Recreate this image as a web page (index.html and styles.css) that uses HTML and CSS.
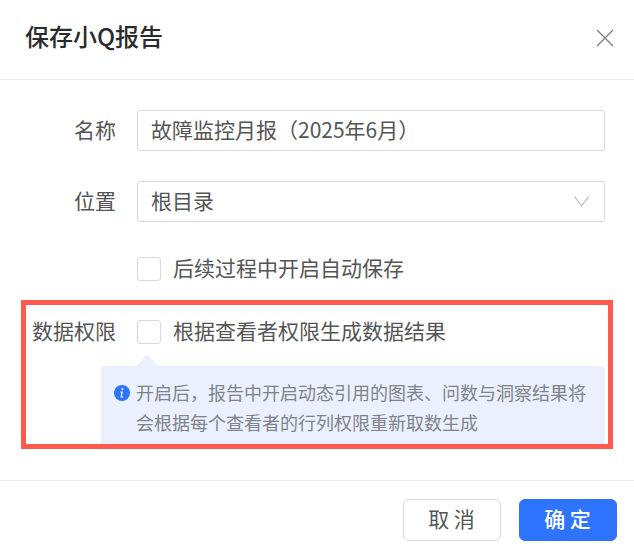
FILE: index.html
```html
<!DOCTYPE html>
<html lang="zh-CN">
<head>
<meta charset="utf-8">
<title>保存小Q报告</title>
<link rel="stylesheet" href="styles.css">
</head>
<body>
<div class="dialog">
  <header class="head">
    <h1 class="title">保存小Q报告</h1>
    <svg class="close" width="18" height="18" viewBox="0 0 18 18"><path d="M1 1L17 17M17 1L1 17" stroke="#808080" stroke-width="1.4" fill="none"/></svg>
  </header>
  <main class="body">
    <div class="row first">
      <label class="label">名称</label>
      <div class="field">故障监控月报（2025年6月）</div>
    </div>
    <div class="row second">
      <label class="label">位置</label>
      <div class="field select">
        <span>根目录</span>
        <svg class="chev" width="15" height="11" viewBox="0 0 15 11"><path d="M0.6 0.6L7.5 10L14.4 0.6" stroke="#bdbdbd" stroke-width="1.2" fill="none"/></svg>
      </div>
    </div>
    <div class="row third">
      <span class="label"></span>
      <span class="check"></span>
      <span class="check-text">后续过程中开启自动保存</span>
    </div>
    <div class="row fourth">
      <span class="label">数据权限</span>
      <span class="check"></span>
      <span class="check-text">根据查看者权限生成数据结果</span>
    </div>
    <div class="tip">
      <span class="tip-arrow"></span>
      <svg class="info" width="16" height="16" viewBox="0 0 16 16"><circle cx="8" cy="8" r="8" fill="#2f74ff"/><rect x="7.4" y="3" width="2" height="2" rx="1" fill="#fff"/><path d="M6.4 6.6H8.9L7.9 11.6H9.2V12.4H6.5L7.4 7.4H6.3Z" fill="#fff"/></svg>
      <p class="tip-text">开启后，报告中开启动态引用的图表、问数与洞察结果将<br>会根据每个查看者的行列权限重新取数生成</p>
    </div>
    <div class="annot"></div>
  </main>
  <footer class="foot">
    <button class="btn">取 消</button>
    <button class="btn primary">确 定</button>
  </footer>
</div>
</body>
</html>
```

FILE: styles.css
```css
* { box-sizing: border-box; }
html, body { margin: 0; padding: 0; background: #fff; }
body {
  width: 634px;
  height: 560px;
  overflow: hidden;
  font-family: "Noto Sans CJK SC", "Noto Sans", sans-serif;
  color: #555;
}
.dialog { display: flex; flex-direction: column; height: 560px; }
.head {
  height: 80px;
  flex: none;
  display: flex;
  align-items: center;
  justify-content: space-between;
  padding: 0 20px 4px 25px;
  border-bottom: 1px solid #ececec;
}
.title { margin: 0 0 3px; font-size: 24px; line-height: 30px; font-weight: 500; color: #2b2b2b; }
.body { position: relative; height: 400px; flex: none; padding: 30px 29px 0 0; }
.row { display: flex; align-items: center; }
.label { width: 116px; flex: none; text-align: right; font-size: 21px; line-height: 26px; padding-bottom: 4px; margin-right: 21px; color: #555; }
.field {
  flex: 1;
  height: 41px;
  border: 1px solid #d9d9d9;
  border-radius: 3px;
  padding: 0 15px 3px 13px;
  font-size: 21px;
  line-height: 36px;
  color: #555;
}
.select { display: flex; align-items: center; justify-content: space-between; }
.chev { margin-top: 3px; }
.second { margin-top: 30px; }
.third { margin-top: 32px; }
.fourth { margin-top: 33px; }
.check { width: 24px; height: 24px; flex: none; border: 1px solid #d9d9d9; border-radius: 3px; background: #fff; margin-right: 12px; }
.check-text { font-size: 21px; line-height: 26px; padding-bottom: 4px; color: #555; }
.tip {
  position: relative;
  margin: 19px 0 0 101px;
  width: 504px;
  height: 80px;
  background: #eaf0fe;
  border-radius: 4px 4px 0 0;
  padding: 11px 0 0 13px;
  display: flex;
  gap: 6px;
}
.tip-arrow {
  position: absolute;
  left: 35px;
  top: -11px;
  width: 0;
  height: 0;
  border-left: 11px solid transparent;
  border-right: 11px solid transparent;
  border-bottom: 11px solid #eaf0fe;
}
.info { flex: none; margin-top: 8px; }
.tip-text { margin: 0; font-size: 18px; line-height: 30px; color: #808489; white-space: nowrap; }
.annot { position: absolute; left: 21px; top: 220px; width: 592px; height: 149px; border: 5px solid #ff5a4e; }
.foot {
  flex: 1;
  border-top: 1px solid #ececec;
  display: flex;
  justify-content: flex-end;
  gap: 18px;
  padding: 18px 17px 0 0;
}
.btn {
  width: 98px;
  height: 42px;
  border: 1px solid #d9d9d9;
  border-radius: 6px;
  background: #fff;
  font-family: inherit;
  font-size: 21px;
  line-height: 26px;
  color: #555;
  padding: 0 1px 4px 0;
}
.primary { background: #2f74ff; border-color: #2f74ff; color: #fff; font-weight: 500; }
```
